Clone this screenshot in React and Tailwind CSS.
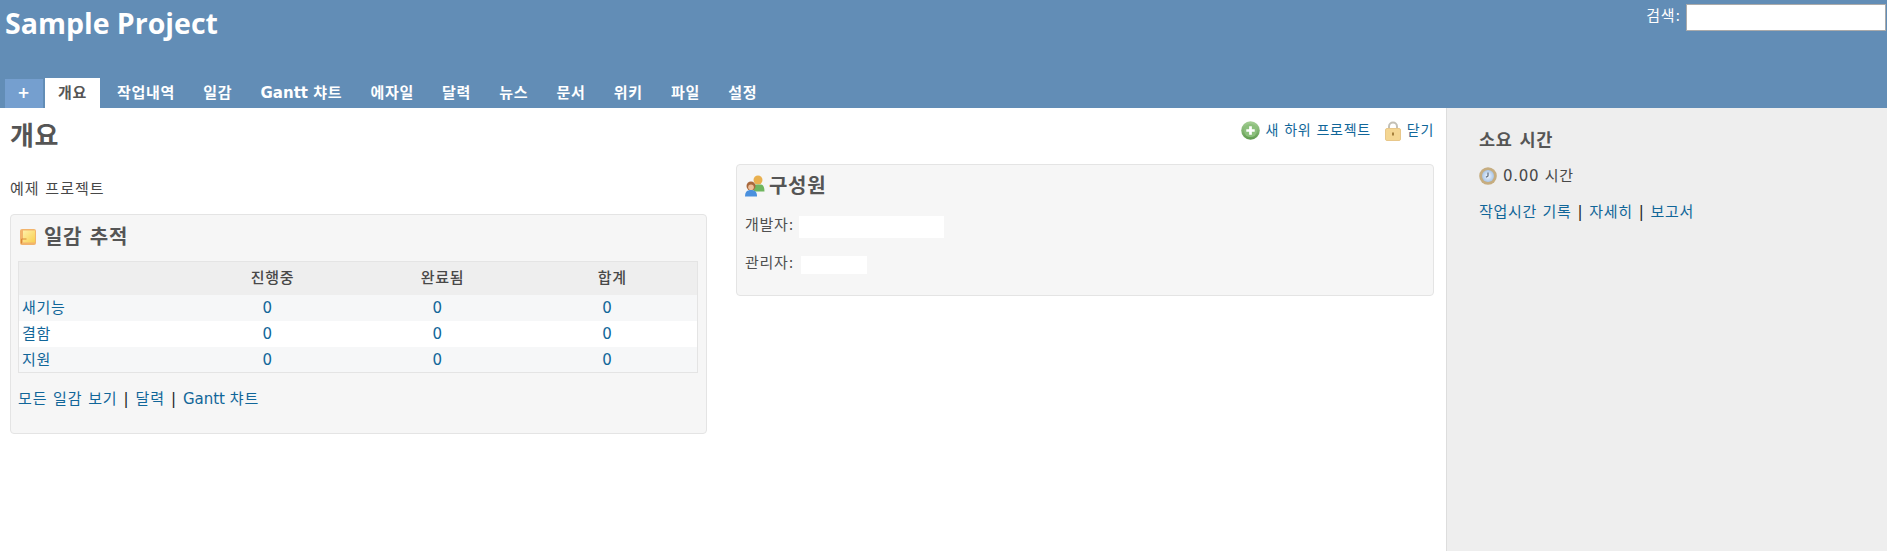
import React from 'react'

const tabs = ['개요', '작업내역', '일감', 'Gantt', '에자일', '달력', '뉴스', '문서', '위키', '파일', '설정']
const rows = ['새기능', '결함', '지원']
const fontBase = "font-['DejaVu_Sans','Noto_Sans_CJK_KR',sans-serif]"

function AddIcon() {
  return (
    <svg width="19" height="19" viewBox="0 0 18 18">
      <defs>
        <linearGradient id="addRing" x1="0" y1="0" x2="0" y2="1">
          <stop offset="0" stopColor="#a5cf95" />
          <stop offset="1" stopColor="#5f9a4e" />
        </linearGradient>
      </defs>
      <circle cx="9" cy="9" r="8.8" fill="url(#addRing)" />
      <circle cx="9" cy="9" r="6.2" fill="#8cc07c" />
      <path d="M9 5v8M5 9h8" stroke="#fff" strokeWidth="2.6" />
    </svg>
  )
}

function LockIcon() {
  return (
    <svg width="16" height="20" viewBox="0 0 16 20">
      <path d="M4 9V5.5a4 4 0 0 1 8 0V9" fill="none" stroke="#c3c0b6" strokeWidth="2" />
      <rect x="0.5" y="7.5" width="15" height="12" rx="1.5" fill="#f4d692" stroke="#e8c78a" />
      <rect x="7" y="11.5" width="2" height="3" fill="#a5803c" />
    </svg>
  )
}

function GroupIcon() {
  return (
    <svg width="21" height="22" viewBox="0 0 21 22">
      <circle cx="14" cy="5" r="4.5" fill="#e9b04f" />
      <path d="M9 9.5h8c2 0 3.500 2.500 3.500 7h-11z" fill="#6fb65f" />
      <circle cx="7" cy="11" r="4.5" fill="#a8683c" />
      <circle cx="7" cy="12.2" r="2.8" fill="#eec09a" />
      <path d="M1 21.500c0-4.500 2-6.500 6-6.500s6 2 6 6.500z" fill="#4a90de" />
    </svg>
  )
}

function NoteIcon() {
  return (
    <svg width="16" height="16" viewBox="0 0 16 16">
      <defs>
        <linearGradient id="noteFill" x1="0" y1="0" x2="1" y2="1">
          <stop offset="0" stopColor="#fff0a8" />
          <stop offset="1" stopColor="#f8cf50" />
        </linearGradient>
      </defs>
      <rect width="16" height="16" rx="2" fill="#f2b46c" />
      <rect x="3" y="1.500" width="12" height="12" fill="url(#noteFill)" />
      <path d="M1.500 14.500V10h5" fill="none" stroke="#d98a35" strokeWidth="1" />
    </svg>
  )
}

function ClockIcon() {
  return (
    <svg width="18" height="18" viewBox="0 0 18 18">
      <defs>
        <radialGradient id="clockFace">
          <stop offset="0" stopColor="#f4f8fd" />
          <stop offset="1" stopColor="#a9c6e8" />
        </radialGradient>
      </defs>
      <circle cx="9" cy="9" r="8.800" fill="#c6ad80" />
      <circle cx="9" cy="9" r="6" fill="url(#clockFace)" />
      <path d="M9 5.500v3.500l-2 1.200" fill="none" stroke="#5d6a7a" strokeWidth="1.200" />
    </svg>
  )
}

function Sep() {
  return <span className="mx-[6px] text-[#222]">|</span>
}

export default function App() {
  return (
    <div className={`flex h-screen flex-col overflow-hidden bg-white text-[15px] tracking-[0.7px] text-[#484848] ${fontBase}`}>
      {/* Header */}
      <header className="flex h-[108px] shrink-0 flex-col justify-between bg-[#628db6]">
        <div className="flex items-start justify-between">
          <h1 className="pl-[5px] pt-[5px] font-['Open_Sans','Noto_Sans_CJK_KR',sans-serif] text-[28.5px] leading-[36px] font-bold tracking-normal text-white">Sample Project</h1>
          <div className="flex items-center pr-px pt-1 text-white">
            <span className="mr-[5px] pb-[3px]">검색:</span>
            <input className="h-[27px] w-[200px] border border-[#aaa] bg-white" />
          </div>
        </div>
        <nav className="flex items-end pl-[5px] font-bold text-white">
          <a className="mr-[2px] flex h-[29px] w-[38px] items-center justify-center bg-[#759fcf]">+</a>
          {tabs.map((t, i) => (
            <a key={t} className={i === 0 ? 'mr-[3px] flex h-[30px] items-center bg-white px-[13px] text-[#555]' : 'flex h-[29px] items-center px-[14.1px]'}>
              {t === 'Gantt' ? <><span className="tracking-normal">Gantt&nbsp;</span>챠트</> : t}
            </a>
          ))}
        </nav>
      </header>

      <div className="flex min-h-0 flex-1">
        {/* Content */}
        <main className="min-w-0 flex-1 pl-[10px] pr-[12px]">
          <div className="flex h-[56px] items-start justify-between">
            <h2 className="pt-[11px] text-[26px] leading-[34px] font-bold text-[#555]">개요</h2>
            <div className="flex items-center pt-[12px] text-[14px] text-[#169]">
              <span className="flex items-center gap-[5px]"><AddIcon />새 하위 프로젝트</span>
              <span className="ml-[14px] flex items-center gap-[6px]"><LockIcon />닫기</span>
            </div>
          </div>
          <div className="flex items-start gap-[29px]">
            {/* Left column */}
            <div className="w-[697px] shrink-0">
              <p className="h-[50px] pt-[15px] leading-[20px] tracking-[1px]">예제 프로젝트</p>
              <section className="h-[220px] rounded-[4px] border border-[#e4e4e4] bg-[#f6f6f6] px-[7px] text-[#505050]">
                <h3 className="flex h-[43px] items-center gap-[8px] pl-[2px] text-[20px] font-bold text-[#555]"><NoteIcon />일감 추적</h3>
                <table className="mt-[3px] w-[680px] table-fixed border border-[#e4e4e4] text-center">
                  <colgroup>
                    <col className="w-[169px]" />
                    <col className="w-[170px]" />
                    <col className="w-[170px]" />
                    <col className="w-[170px]" />
                  </colgroup>
                  <thead>
                    <tr className="h-[33px] bg-[#eee] text-[#484848]">
                      <th />
                      <th className="font-medium">진행중</th>
                      <th className="font-medium">완료됨</th>
                      <th className="font-medium">합계</th>
                    </tr>
                  </thead>
                  <tbody className="text-[#169]">
                    {rows.map((r, i) => (
                      <tr key={r} className={i % 2 === 0 ? 'h-[26px] bg-[#f6f7f8]' : 'h-[26px] bg-white'}>
                        <td className="pl-[3px] pt-px text-left">{r}</td>
                        <td className="pr-[10px] pt-px">0</td>
                        <td className="pr-[10px] pt-px">0</td>
                        <td className="pr-[10px] pt-px">0</td>
                      </tr>
                    ))}
                  </tbody>
                </table>
                <p className="mt-[16px] leading-[20px] tracking-[0.9px] text-[#169]">
                  모든 일감 보기<Sep />달력<Sep /><span className="tracking-normal">Gantt </span>챠트
                </p>
              </section>
            </div>

            {/* Right column */}
            <section className="h-[132px] flex-1 rounded-[4px] border border-[#e4e4e4] bg-[#f6f6f6] px-[7px] text-[#505050]">
              <h3 className="flex h-[42px] items-center gap-[4px] text-[20px] font-bold text-[#555]"><GroupIcon />구성원</h3>
              <div className="mt-[5px] flex h-[30px] items-center pl-[1px]">
                <span className="mr-[5px] pb-[3px]">개발자:</span>
                <span className="h-[22px] w-[145px] bg-white" />
              </div>
              <div className="mt-[8px] flex h-[30px] items-center pl-[1px]">
                <span className="mr-[7px] pb-[3px]">관리자:</span>
                <span className="h-[18px] w-[66px] bg-white" />
              </div>
            </section>
          </div>
        </main>

        {/* Sidebar */}
        <aside className="w-[441px] shrink-0 border-l border-[#ddd] bg-[#eee] pl-[32px] pt-[20px]">
          <h3 className="text-[17.5px] leading-[24px] font-bold text-[#555]">소요 시간</h3>
          <div className="mt-[14px] flex items-center gap-[6px] leading-[20px]"><ClockIcon />0.00 시간</div>
          <p className="mt-[16px] leading-[20px] text-[#169]">작업시간 기록<Sep />자세히<Sep />보고서</p>
        </aside>
      </div>
    </div>
  )
}
